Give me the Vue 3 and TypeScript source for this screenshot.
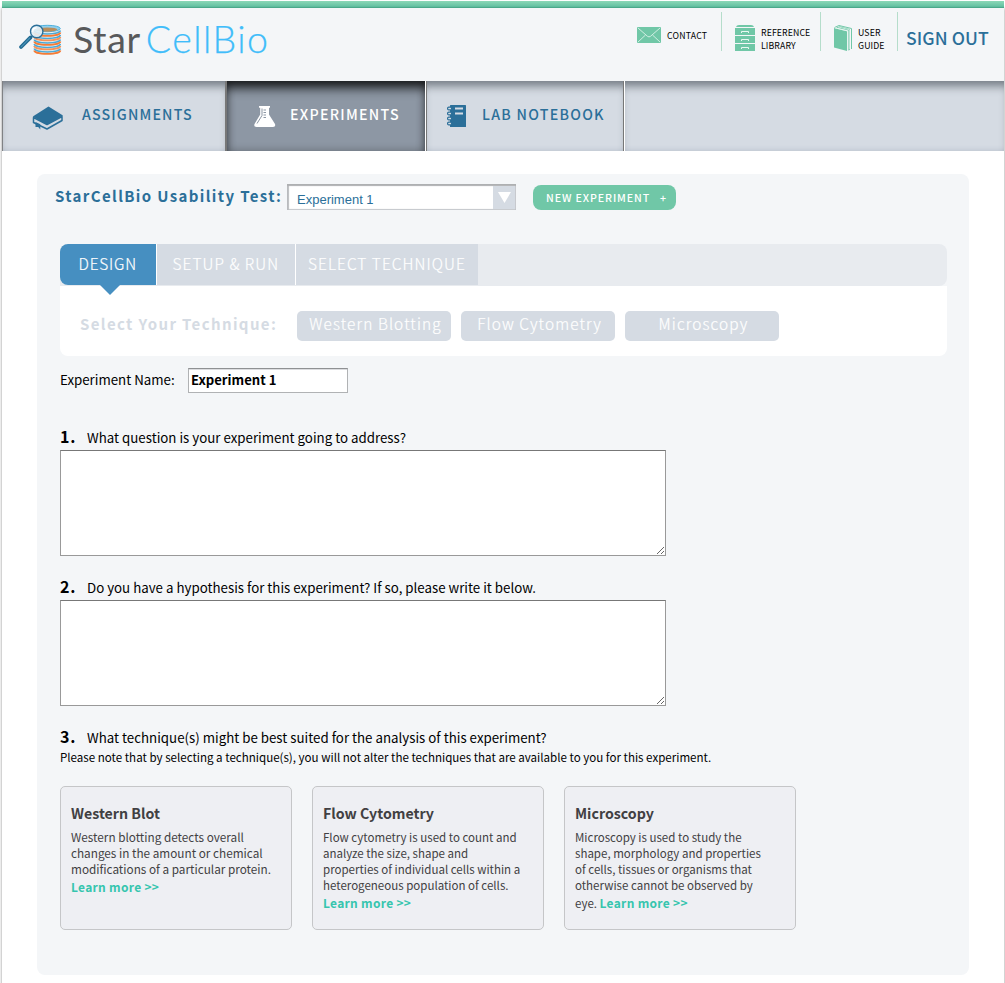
<script setup lang="ts">
import { ref } from 'vue'

interface Technique {
  title: string
  body: string
}

const experimentName = ref('Experiment 1')
const question = ref('')
const hypothesis = ref('')

const steps: string[] = ['DESIGN', 'SETUP & RUN', 'SELECT TECHNIQUE']
const techniqueButtons: string[] = ['Western Blotting', 'Flow Cytometry', 'Microscopy']

const techniques: Technique[] = [
  {
    title: 'Western Blot',
    body: 'Western blotting detects overall\nchanges in the amount or chemical\nmodifications of a particular protein.\n',
  },
  {
    title: 'Flow Cytometry',
    body: 'Flow cytometry is used to count and\nanalyze the size, shape and\nproperties of individual cells within a\nheterogeneous population of cells.\n',
  },
  {
    title: 'Microscopy',
    body: 'Microscopy is used to study the\nshape, morphology and properties\nof cells, tissues or organisms that\notherwise cannot be observed by\neye. ',
  },
]

const bands: number[] = [0, 1, 2, 3, 4]
</script>

<template>
  <div class="frame">
    <div class="topbar"></div>

    <header class="header">
      <a class="logo">
        <svg class="logo-icon" width="44" height="32" viewBox="0 0 44 32">
          <path d="M16.300 5 V25 A13 3.300 0 0 0 42.300 25 V5 Z" fill="#e3eff5" />
          <g v-for="b in bands" :key="b" fill="none">
            <path
              :d="`M16.300 ${6.6 + b * 4.5} A13 3.300 0 0 0 42.300 ${6.6 + b * 4.5}`"
              stroke="#4aa9d6"
              stroke-width="1.500"
            />
            <path
              :d="`M16.300 ${8.6 + b * 4.5} A13 3.300 0 0 0 42.300 ${8.6 + b * 4.5}`"
              :stroke="b % 2 ? '#f4935a' : '#f47b35'"
              stroke-width="1.800"
            />
          </g>
          <ellipse cx="29.300" cy="4.500" rx="13" ry="3.200" fill="#8fd0ee" stroke="#4fb0dc" stroke-width="1" />
          <ellipse cx="29.300" cy="5.600" rx="10" ry="2.100" fill="#b98d5c" />
          <path d="M12.600 13.400 L3 23" stroke="#226a91" stroke-width="3.800" stroke-linecap="round" />
          <path d="M11.800 14 L3.200 22.800" stroke="#4b93b8" stroke-width="1.100" stroke-linecap="round" />
          <circle cx="18.700" cy="7.500" r="6.200" fill="#e6f0f5" fill-opacity="0.900" stroke="#2b6f99" stroke-width="1.400" />
          <path d="M14.500 7.800 A4.200 4.200 0 0 1 18.500 3.700" fill="none" stroke="#fff" stroke-width="1.500" />
        </svg>
        <span class="logo-star">Star</span><span class="logo-cell">CellBio</span>
      </a>

      <nav class="links">
        <a class="link contact">
          <svg width="24" height="16" viewBox="0 0 24 16">
            <rect width="24" height="16" rx="1" fill="#70c7a7" />
            <path d="M1 1 L10.500 9.300 Q12 10.500 13.500 9.300 L23 1 M1 15 L8.500 8 M23 15 L15.500 8" fill="none" stroke="#d9f2e8" stroke-width="0.900" />
          </svg>
          <span>CONTACT</span>
        </a>
        <a class="link library">
          <svg width="20" height="26" viewBox="0 0 20 26">
            <path d="M1 2 Q1.500 0 4 0 H16 Q18.500 0 19 2 Z M0 3 H20 V10 H0 Z M0 11 H20 V18 H0 Z M0 19 H20 V26 H0 Z" fill="#70c7a7" />
            <path d="M6.500 8 V6.500 H13.500 V8 M6.500 16 V14.500 H13.500 V16 M6.500 24 V22.500 H13.500 V24" fill="none" stroke="#eaf8f2" stroke-width="1" />
          </svg>
          <span>REFERENCE<br />LIBRARY</span>
        </a>
        <a class="link guide">
          <svg width="18" height="26" viewBox="0 0 18 26">
            <path d="M0 3 L13 6.300 V26 L0 22.500 Z" fill="#70c7a7" />
            <path d="M0.500 2.500 L5 0.500 L17.500 3.500 V24" fill="none" stroke="#70c7a7" stroke-width="1" />
            <path d="M2 2.600 L5.500 1.300 L15.800 4 V25 L14.300 25.500 V5.600 Z" fill="#70c7a7" />
            <path d="M1 2.900 L13.600 6 V25.500 M4 1.900 L15.300 4.700 V24" fill="none" stroke="#e3f5ee" stroke-width="0.700" />
          </svg>
          <span>USER<br />GUIDE</span>
        </a>
        <a class="signout">SIGN OUT</a>
      </nav>
    </header>

    <nav class="nav">
      <a class="nav-item assignments">
        <svg class="book" width="32" height="25" viewBox="0 0 32 25">
          <path d="M1.500 11.500 V16.500 L15 23 L30 14.500 V10.500 L15 18.500 Z" fill="#d5dbe3" stroke="#2b6f99" stroke-width="1.500" stroke-linejoin="round" />
          <path d="M0.800 10.500 L16.500 0.500 L31 9.500 L15 18.800 Z" fill="#2b6f99" />
          <path d="M3.500 16 L8.300 18.300 V23.500 L6.200 21 L3.500 21 Z" fill="#2b6f99" />
        </svg>
        <span>ASSIGNMENTS</span>
      </a>
      <a class="nav-item experiments">
        <svg class="flask" width="22" height="22" viewBox="0 0 22 22">
          <path d="M5 0 H16 V1.800 H15 V8.500 L21 18 Q22 21 19 21 H2.500 Q-0.500 21 0.500 18 L6.200 8.500 V1.800 H5 Z" fill="#fff" />
          <path d="M3 17.500 L8 9.500 V2.500 M9.500 4 H12 M9.500 6.500 H12 M9.500 9 H12 M9.500 11.500 H12" fill="none" stroke="#8d97a4" stroke-width="1" />
        </svg>
        <span>EXPERIMENTS</span>
      </a>
      <a class="nav-item notebook">
        <svg class="pad" width="20" height="22" viewBox="0 0 20 22">
          <rect x="3" y="0" width="16" height="22" rx="0.500" fill="#2b6f99" />
          <path d="M8 3.500 H16 M8 8.500 H16" stroke="#d5dbe3" stroke-width="2" />
          <g v-for="y in [3.5, 8.5, 13.5, 18.5]" :key="y">
            <rect x="0.600" :y="y - 1.4" width="4" height="2.800" rx="1.200" fill="#d5dbe3" stroke="#2b6f99" stroke-width="1.200" />
          </g>
        </svg>
        <span>LAB NOTEBOOK</span>
      </a>
      <div class="nav-rest"></div>
    </nav>

    <main class="main">
      <section class="panel">
        <div class="title-row">
          <h1>StarCellBio Usability Test:</h1>
          <div class="select">
            <span>Experiment 1</span>
            <i class="arrow">
              <svg width="13" height="11" viewBox="0 0 13 11"><path d="M0 0 H13 L6.500 11 Z" fill="#fff" /></svg>
            </i>
          </div>
          <button class="new-exp" type="button">NEW EXPERIMENT<b>+</b></button>
        </div>

        <div class="steps">
          <div v-for="s in steps" :key="s" class="step">{{ s }}</div>
        </div>
        <div class="substeps">
          <strong>Select Your Technique:</strong>
          <span v-for="t in techniqueButtons" :key="t" class="tech">{{ t }}</span>
        </div>

        <div class="name-row">
          <label for="exp-name">Experiment Name:</label>
          <input id="exp-name" v-model="experimentName" type="text" />
        </div>

        <div class="q"><b>1.</b><span>What question is your experiment going to address?</span></div>
        <textarea v-model="question"></textarea>
        <div class="q"><b>2.</b><span>Do you have a hypothesis for this experiment? If so, please write it below.</span></div>
        <textarea v-model="hypothesis"></textarea>
        <div class="q"><b>3.</b><span>What technique(s) might be best suited for the analysis of this experiment?</span></div>
        <p class="note">
          Please note that by selecting a technique(s), you will not alter the techniques that are available to you for this experiment.
        </p>

        <div class="cards">
          <article v-for="t in techniques" :key="t.title" class="card">
            <h2>{{ t.title }}</h2>
            <p>{{ t.body }}<a>Learn more &gt;&gt;</a></p>
          </article>
        </div>
      </section>
    </main>
  </div>
</template>

<style>
body {
  background: #fff;
  overflow: hidden;
}
</style>

<style scoped>
.frame {
  box-sizing: border-box;
  width: 1002px;
  height: 990px;
  margin: 1px 0 0 2px;
  background: #fff;
  box-shadow: 0 7px 3px rgba(0, 0, 0, 0.45);
  font-family: "Noto Sans CJK SC", "Noto Sans", sans-serif;
  color: #000;
}
.topbar {
  height: 7px;
  background: linear-gradient(#8bd8b7, #66c2a3 75%, #3f9f80);
}
.header {
  height: 73px;
  display: flex;
  justify-content: space-between;
  background: #f4f6f8;
}
.logo {
  display: flex;
  align-items: flex-start;
  padding: 16px 0 0 16px;
  font: 300 37.5px/30px Lato, "Open Sans", sans-serif;
}
.logo-icon {
  flex: none;
}
.logo-star {
  margin-left: 11px;
  font-weight: 400;
  letter-spacing: 0.6px;
  color: #58595b;
}
.logo-cell {
  margin-left: 5px;
  letter-spacing: 1.5px;
  color: #40bdfa;
  -webkit-text-stroke: 0.25px #40bdfa;
}
.links {
  display: flex;
  padding-top: 4px;
}
.link {
  box-sizing: border-box;
  height: 39px;
  display: flex;
  align-items: flex-start;
  border-right: 1px solid #b5ddcb;
  font-size: 8.75px;
  line-height: 13px;
  letter-spacing: 0.1px;
}
.link span {
  margin-left: 6px;
}
.contact {
  width: 85px;
  padding-top: 15px;
  letter-spacing: 0.2px;
}
.contact span {
  margin-top: 2px;
}
.library {
  width: 99px;
  padding: 13px 0 0 13px;
}
.guide {
  width: 77px;
  padding: 13px 0 0 13px;
}
.library span,
.guide span {
  margin-top: 1px;
}
.signout {
  width: 106px;
  box-sizing: border-box;
  padding: 15px 0 0 8px;
  font-size: 17.6px;
  font-weight: 500;
  line-height: 22px;
  letter-spacing: 0.06px;
  color: #2b6f99;
  white-space: nowrap;
}

.nav {
  height: 70px;
  display: flex;
}
.nav-item {
  box-sizing: border-box;
  display: flex;
  align-items: flex-start;
  background: #d5dbe3;
  box-shadow: inset 0 10px 10px -5px rgba(50, 58, 68, 0.6), inset 0 -5px 5px -4px rgba(120, 130, 150, 0.25);
  color: #2b6f99;
  font-size: 14.2px;
  font-weight: 500;
  line-height: 20px;
  letter-spacing: 1.27px;
  white-space: nowrap;
}
.nav-item span {
  margin-top: 23px;
}
.nav-item svg {
  flex: none;
}
.assignments {
  width: 223px;
  border-left: 1px solid #808285;
  padding-left: 29px;
  letter-spacing: 1.15px;
}
.book {
  margin: 25px 18px 0 0;
}
.experiments {
  width: 200px;
  border-left: 2px solid #777;
  padding-left: 27px;
  background: #8d97a4;
  color: #fff;
  box-shadow: inset 0 10px 11px -3px rgba(0, 0, 0, 0.8), inset 0 0 8px rgba(0, 0, 0, 0.3);
}
.flask {
  margin: 25px 14px 0 0;
}
.notebook {
  width: 198px;
  margin-left: 1px;
  border-left: 1px solid #777;
  border-right: 1px solid #777;
  padding-left: 20px;
}
.pad {
  margin: 24px 15px 0 0;
}
.nav-rest {
  flex: 1;
  margin-left: 1px;
  background: #d5dbe3;
  box-shadow: inset 0 10px 10px -5px rgba(50, 58, 68, 0.6), inset 0 -5px 5px -4px rgba(120, 130, 150, 0.25);
}

.main {
  padding: 23px 35px 0;
}
.panel {
  box-sizing: border-box;
  width: 932px;
  height: 801px;
  padding: 10px 22px 0 23px;
  border-radius: 8px;
  background: #f4f6f8;
}
.title-row {
  display: flex;
  align-items: flex-start;
  height: 60px;
  margin-left: -5px;
}
h1 {
  width: 232px;
  margin: 0;
  font-size: 15px;
  font-weight: 700;
  line-height: 24px;
  letter-spacing: 1.37px;
  color: #2b6f99;
  white-space: nowrap;
}
.select {
  box-sizing: border-box;
  display: flex;
  justify-content: space-between;
  width: 229px;
  height: 26px;
  padding: 2px 1px 1px 10px;
  background: #fff;
  box-shadow: inset 0 2px 1px #aeb0b2, inset 2px 0 1px #bbbdbf, inset -1px -1px 1px #c5c8cc;
  font: 13px/27px "Liberation Sans", Arial, sans-serif;
  color: #2b6f99;
}
.arrow {
  width: 22px;
  height: 23px;
  background: #d5dbe3;
  display: flex;
  justify-content: center;
  align-items: center;
}
.new-exp {
  width: 143px;
  height: 25px;
  margin: 1px 0 0 17px;
  padding: 0 0 0 13px;
  border: 0;
  border-radius: 8px;
  background: #70c7a7;
  color: #fff;
  font: 500 10.6px/25px "Noto Sans CJK SC", sans-serif;
  letter-spacing: 0.9px;
  text-align: left;
  white-space: nowrap;
}
.new-exp b {
  margin-left: 10px;
  font-weight: 500;
}
.steps {
  display: flex;
  height: 42px;
  border-radius: 8px 8px 8px 0;
  background: #e8ebef;
}
.step {
  box-sizing: border-box;
  height: 41px;
  padding-left: 12px;
  margin-right: 1px;
  background: #d5dbe3;
  color: #fff;
  font-size: 15.4px;
  font-weight: 300;
  line-height: 39px;
  letter-spacing: 1.08px;
  white-space: nowrap;
  box-shadow: 1px 0 0 #fff;
  -webkit-text-stroke: 0.2px #fff;
}
.step:nth-child(1) {
  position: relative;
  width: 96px;
  padding-left: 18.5px;
  border-radius: 8px 0 0 8px;
  background: #468fc1;
  letter-spacing: 0.8px;
}
.step:nth-child(1)::after {
  content: "";
  position: absolute;
  left: 40px;
  top: 41px;
  border: 10px solid transparent;
  border-top-color: #468fc1;
  border-bottom: 0;
}
.step:nth-child(2) {
  width: 138px;
  padding-left: 15.5px;
}
.step:nth-child(3) {
  width: 182px;
  box-shadow: none;
}
.substeps {
  box-sizing: border-box;
  display: flex;
  height: 70px;
  padding: 25px 0 0 20px;
  border-radius: 0 0 8px 8px;
  background: #fff;
}
.substeps strong {
  width: 217px;
  font-size: 15px;
  line-height: 25px;
  letter-spacing: 1.37px;
  color: #d5dbe3;
}
.tech {
  box-sizing: border-box;
  width: 154px;
  height: 30px;
  margin-right: 10px;
  padding-left: 3px;
  border-radius: 5px;
  background: #d5dbe3;
  color: #fff;
  font-size: 15.4px;
  font-weight: 300;
  line-height: 25px;
  letter-spacing: 1.12px;
  text-align: center;
  white-space: nowrap;
  -webkit-text-stroke: 0.2px #fff;
}
.name-row {
  display: flex;
  height: 25px;
  margin: 12px 0 33px;
  font-size: 13.3px;
  line-height: 24px;
}
.name-row label {
  width: 128px;
}
.name-row input {
  box-sizing: border-box;
  width: 160px;
  height: 25px;
  margin: 0;
  padding: 0 2px 2px;
  border: 1px solid #b0b2b4;
  border-top: 1px solid #8f9193;
  box-shadow: inset 0 1px 0 #dcdde0;
  border-radius: 0;
  outline: 0;
  background: #fff;
  font: 700 13.1px/20px "Noto Sans CJK SC", sans-serif;
  color: #000;
}
.q {
  display: flex;
  align-items: baseline;
  height: 24px;
  font-size: 13.3px;
  line-height: 20px;
  white-space: nowrap;
}
.q b {
  width: 27px;
  font-size: 16px;
  font-weight: 700;
  letter-spacing: 0.8px;
}
textarea {
  display: block;
  box-sizing: border-box;
  width: 606px;
  height: 106px;
  margin: 0 0 20px;
  border: 1px solid #999;
  border-top-color: #777;
  border-radius: 0;
  outline: 0;
  background: #fff;
}
.note {
  margin: 0 0 22px;
  font-size: 11.57px;
  line-height: 14px;
  white-space: nowrap;
}
.cards {
  display: flex;
  gap: 20px;
}
.card {
  box-sizing: border-box;
  width: 232px;
  height: 144px;
  padding: 16px 0 0 10px;
  border: 1px solid #c5c6c8;
  border-radius: 5px;
  background: #eeeff3;
  color: #414042;
}
h2 {
  margin: 0 0 6px;
  font-size: 14.2px;
  font-weight: 700;
  line-height: 20px;
}
.card p {
  margin: 0;
  font-size: 11.75px;
  line-height: 16px;
  white-space: pre;
}
.card:nth-child(n + 2) p {
  font-size: 11.53px;
}
.card a {
  font-size: 12px;
  font-weight: 700;
  line-height: 19.5px;
  letter-spacing: 0.3px;
  color: #36c5ae;
}
</style>
